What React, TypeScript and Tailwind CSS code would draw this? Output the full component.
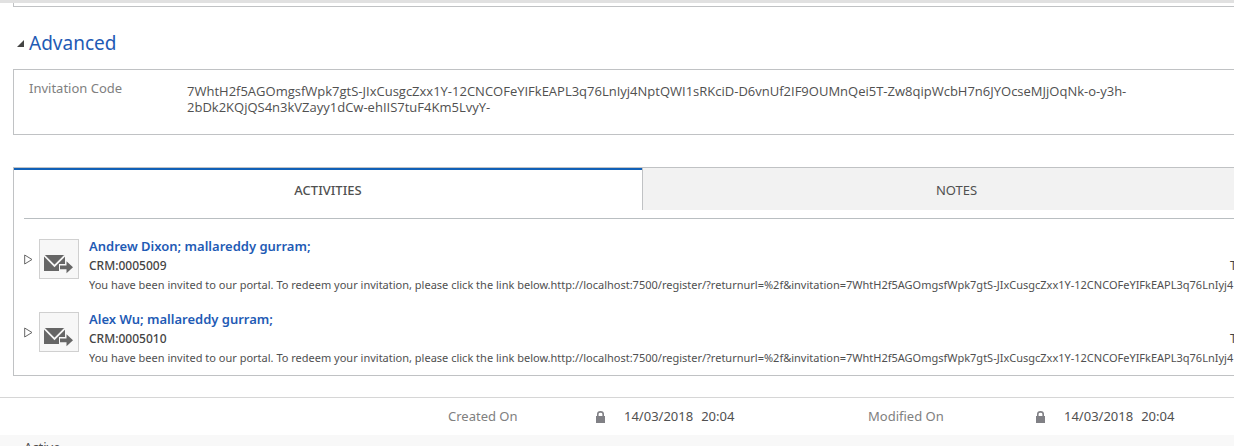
import type { ReactNode } from 'react';

const CODE_START = '7WhtH2f5AGOmgsfWpk7gtS-JIxCusgcZxx1Y-12CNCOFeYIFkEAPL3q76LnIyj4NptQWI1sRKciD-D6vnUf2IF9OUMnQei5T-Zw8qipWcbH7n6JYOcseMJjOqNk-o-y3h-';
const CODE_END = '2bDk2KQjQS4n3kVZayy1dCw-ehIIS7tuF4Km5LvyY-';
const INVITE_TEXT =
  'You have been invited to our portal. To redeem your invitation, please click the link below.http://localhost:7500/register/?returnurl=%2f&invitation=7WhtH2f5AGOmgsfWpk7gtS-JIxCusgcZxx1Y-12CNCOFeYIFkEAPL3q76LnIyj4';

const activities = [
  { id: 'CRM:0005009', people: 'Andrew Dixon; mallareddy gurram;' },
  { id: 'CRM:0005010', people: 'Alex Wu; mallareddy gurram;' }
];

function MailIcon() {
  return (
    <svg width="30" height="20" viewBox="0 0 30 20" fill="#666666" aria-hidden="true">
      <rect y="1" width="21" height="16" />
      <path d="M0 1.3 L10.5 12 L21 1.3" fill="none" stroke="#f7f7f7" strokeWidth="1.8" />
      <path d="M15 10 H24 V17 H15Z" fill="#f7f7f7" />
      <path d="M16 11.5 H22.5 V7.2 L29 13.2 L22.5 19.2 V15.2 H16Z" />
    </svg>
  );
}

function LockIcon() {
  return (
    <svg width="9" height="12" viewBox="0 0 9 12" aria-hidden="true">
      <path d="M1.8 5.5 V3 Q1.8 0.9 4.5 0.9 Q7.2 0.9 7.2 3 V5.5" fill="none" stroke="#808085" strokeWidth="1.6" />
      <rect y="5" width="9" height="7" fill="#808085" />
    </svg>
  );
}

function Panel({ children, className }: { children: ReactNode; className: string }) {
  return <div className={`-mr-[37px] ml-[13px] border border-[#c0c2c4] ${className}`}>{children}</div>;
}

function FooterField({ label, labelWidth }: { label: string; labelWidth: string }) {
  return (
    <dl className="flex w-[420px] shrink-0 items-center">
      <dt className={`text-[#808080] ${labelWidth}`}>{label}</dt>
      <dd className="flex items-center">
        <span className="w-7">
          <LockIcon />
        </span>
        <span className="mr-2">14/03/2018</span>
        <span>20:04</span>
      </dd>
    </dl>
  );
}

function Activity({ id, people }: { id: string; people: string }) {
  return (
    <li className="flex h-[73px]">
      <button aria-label="Expand activity" className="mt-[14px] h-3 w-[15px]">
        <svg width="9" height="11" viewBox="0 0 9 11" fill="none" stroke="#666666" aria-hidden="true">
          <path d="M0.7 1 L8 5.5 L0.7 10Z" />
        </svg>
      </button>
      <div className="flex h-10 w-10 shrink-0 items-end border border-[#d0d0d0] bg-[#f7f7f7] pb-1 pl-1">
        <MailIcon />
      </div>
      <div className="-mt-[3px] ml-[10px] min-w-0 flex-1">
        <a href="#" className="block text-[13px] leading-5 font-semibold text-[#1f5bb5]">
          {people}
        </a>
        <div className="flex justify-between text-[12px] leading-5 text-[#444444]">
          <span className="font-medium">{id}</span>
          <span className="w-[30px]">T</span>
        </div>
        <p className="overflow-hidden text-[11px] leading-[18px] whitespace-nowrap">{INVITE_TEXT}</p>
      </div>
    </li>
  );
}

export default function App() {
  return (
    <main className="overflow-hidden bg-white font-['Noto_Sans',sans-serif] text-[13px] text-[#505050]">
      <div className="h-[3px] bg-[#e1e1e1]" />
      <Panel className="h-1 border-t-0">{null}</Panel>

      <section>
        <h2 className="mt-[23px] mb-[13px] flex h-[26px] items-center pl-[17px] text-[19px] text-[#1f5bb5]">
          <svg width="7" height="7" viewBox="0 0 7 7" className="mr-[5px]" aria-hidden="true">
            <path d="M7 0 V7 H0Z" fill="#444444" />
          </svg>
          Advanced
        </h2>
        <Panel className="flex h-[66px] pl-[15px]">
          <div className="mt-2 w-[158px] shrink-0 leading-5 text-[#808080]">Invitation Code</div>
          <div className="mt-[13px] font-['Open_Sans','Noto_Sans',sans-serif] leading-4 whitespace-nowrap">
            {CODE_START}
            <br />
            {CODE_END}
          </div>
        </Panel>
      </section>

      <Panel className="mt-8 h-[209px]">
        <div role="tablist" className="grid h-[42px] grid-cols-2">
          <button role="tab" aria-selected="true" className="border-t-2 border-[#1160b7] pt-0.5 font-medium">
            ACTIVITIES
          </button>
          <button role="tab" aria-selected="false" className="border-l border-[#c0c2c4] bg-[#f2f2f2] pt-1">
            NOTES
          </button>
        </div>
        <ul className="mx-[10px] mt-2 border-t border-[#b9bec1] pt-5">
          {activities.map(activity => (
            <Activity key={activity.id} {...activity} />
          ))}
        </ul>
      </Panel>

      <footer className="mt-[21px] border-t border-[#d6d6d6]">
        <div className="flex h-[37px] items-center pl-[448px]">
          <FooterField label="Created On" labelWidth="w-[148px]" />
          <FooterField label="Modified On" labelWidth="w-[168px]" />
        </div>
        <div className="h-[11px] overflow-hidden bg-[#f8f8f8] pt-0.5 pl-6 leading-5">Active</div>
      </footer>
    </main>
  );
}
